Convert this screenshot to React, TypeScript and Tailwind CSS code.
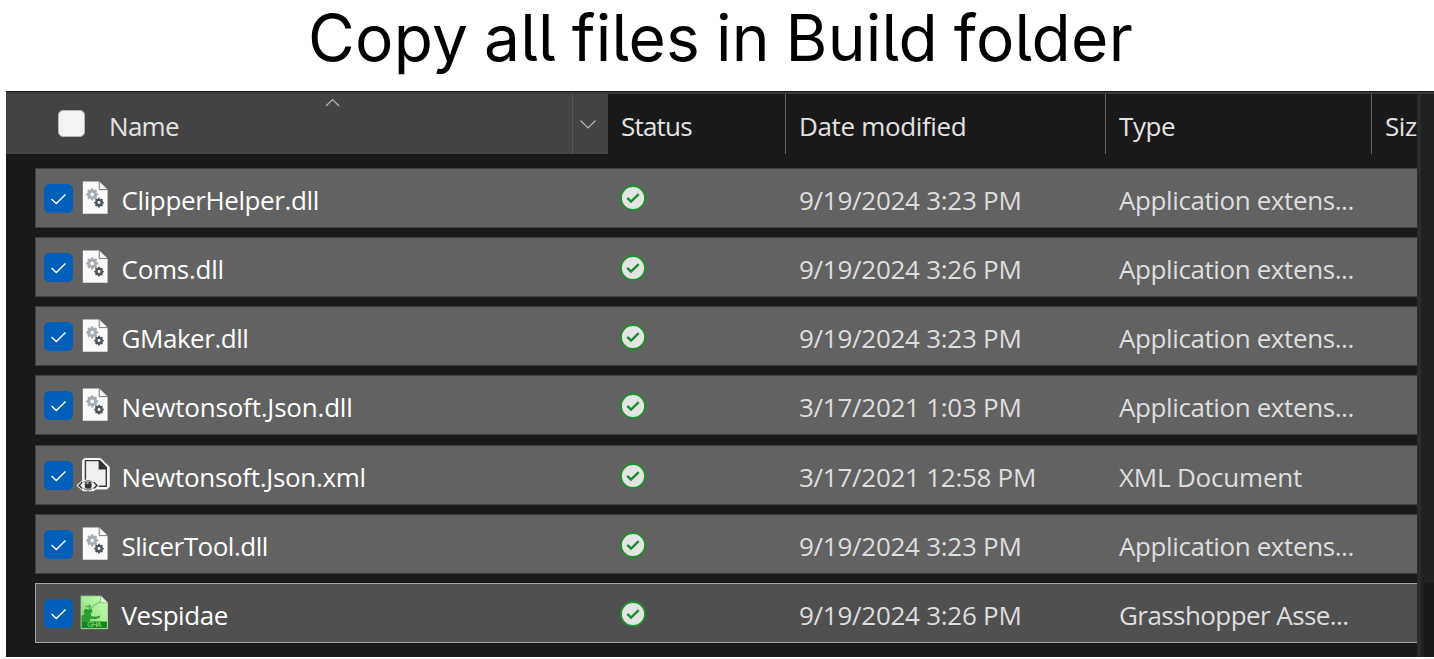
const rows = [
  { name: "ClipperHelper.dll", date: "9/19/2024 3:23 PM", type: "Application extens...", icon: "dll" },
  { name: "Coms.dll", date: "9/19/2024 3:26 PM", type: "Application extens...", icon: "dll" },
  { name: "GMaker.dll", date: "9/19/2024 3:23 PM", type: "Application extens...", icon: "dll" },
  { name: "Newtonsoft.Json.dll", date: "3/17/2021 1:03 PM", type: "Application extens...", icon: "dll" },
  { name: "Newtonsoft.Json.xml", date: "3/17/2021 12:58 PM", type: "XML Document", icon: "xml" },
  { name: "SlicerTool.dll", date: "9/19/2024 3:23 PM", type: "Application extens...", icon: "dll" },
  { name: "Vespidae", date: "9/19/2024 3:26 PM", type: "Grasshopper Asse...", icon: "gha" },
];

function Gear({ cx, cy, r, color }: { cx: number; cy: number; r: number; color: string }) {
  return (
    <g stroke={color} fill="none">
      <circle cx={cx} cy={cy} r={r * 0.56} strokeWidth={r * 0.5} />
      {[0, 45, 90, 135, 180, 225, 270, 315].map((a) => (
        <path key={a} d={`M${cx} ${cy - r * 0.68}V${cy - r}`} strokeWidth={r * 0.38} transform={`rotate(${a} ${cx} ${cy})`} />
      ))}
    </g>
  );
}

function FileIcon({ kind }: { kind: string }) {
  if (kind === "dll")
    return (
      <svg width="34" height="38" viewBox="0 0 34 38" className="block">
        <path d="M4.8 2.5H21L29.6 11V34.7H4.8Z" fill="#fafafa" />
        <path d="M21.2 2.5V10.6H29.6" fill="#f3f3f3" stroke="#777" strokeWidth="1" />
        <Gear cx={14.2} cy={15.4} r={6} color="#a3abb3" />
        <Gear cx={21} cy={23.6} r={4.8} color="#4b555d" />
      </svg>
    );
  if (kind === "xml")
    return (
      <svg width="34" height="38" viewBox="0 0 34 38" className="block overflow-visible">
        <path d="M7 3.4H22L30.4 11.4V30L28.4 32H16L5.4 26V5Z" fill="#f5f5f5" stroke="#f5f5f5" strokeWidth="2.8" strokeLinejoin="round" />
        <path d="M7.4 24V4.6H21.5L28.3 12V30.2H19.5" fill="#efefef" stroke="#3a3a3a" strokeWidth="1.4" />
        <path d="M20.6 4.6H22.4L28.8 11V13.6H20.6Z" fill="#333" />
        <path d="M0 29.4L5.5 25H15.5L20 29.4L15.5 34H5.5Z" fill="#f5f5f5" stroke="#f5f5f5" strokeWidth="2.4" strokeLinejoin="round" />
        <path d="M4.2 26.3L1 29.4L4.2 32.5M15.8 26.3L19 29.4L15.8 32.5" fill="none" stroke="#3a3a3a" strokeWidth="1.5" />
        <path d="M5.6 26.4Q10 22.8 14.4 26.4M5.6 32.4Q10 35.8 14.4 32.4" fill="none" stroke="#5a5a5a" strokeWidth="1" />
        <rect x="6.8" y="25.8" width="6.8" height="7" rx="2.4" fill="#333" />
        <path d="M8.4 27.2H10.6" stroke="#ddd" strokeWidth="1.2" />
      </svg>
    );
  return (
    <svg width="34" height="38" viewBox="0 0 34 38" className="block">
      <defs>
        <linearGradient id="leaf" x1="0" y1="1" x2="1" y2="0">
          <stop offset="0" stopColor="#6cc863" />
          <stop offset="0.5" stopColor="#a5ec93" />
          <stop offset="1" stopColor="#ccfcba" />
        </linearGradient>
      </defs>
      <path d="M3.2 2.2H23L29.4 8.4V34.6H3.2Z" fill="url(#leaf)" stroke="#b0e0a4" />
      <path d="M3.5 27.5V22L6.5 20L5.5 17.5L7.5 14.5L10 15.5L13.5 14.8L14.5 17.5L12.5 20L13.5 22.3L18 22.8L22 21.6V23.6L17.5 25.3L12.5 24.6L11.5 27.5Z" fill="#2c9c34" />
      <path d="M12.5 15L16 11.5L24 6.5" fill="none" stroke="#85c278" strokeWidth="1.2" />
      <path d="M7.5 12.5H13M11.5 15V10.5" fill="none" stroke="#55a750" strokeWidth="1.4" />
      <path d="M22.6 2.7V8.8H29" fill="#e8fbe2" stroke="#85c278" />
      <path d="M3.7 27.5H28.9V34.1H3.7Z" fill="#108718" />
      <text x="9.3" y="33.4" fontSize="7" textLength="14" fontFamily="Liberation Sans, sans-serif" fill="#a3e494">GHA</text>
    </svg>
  );
}

function Synced() {
  return (
    <svg width="26" height="26" viewBox="0 0 26 26" className="block">
      <circle cx="13" cy="13" r="12" fill="#e4e4e4" stroke="#189429" strokeWidth="1.8" />
      <path d="M7.3 12.9L11 16.6L18.7 9.1" fill="none" stroke="#168b2b" strokeWidth="2.3" />
    </svg>
  );
}

const tracking: Record<string, string> = {
  "ClipperHelper.dll": "tracking-[-0.38px]",
  "Coms.dll": "tracking-[-0.25px]",
  "GMaker.dll": "tracking-[-0.45px]",
  "Newtonsoft.Json.dll": "tracking-[-0.2px]",
  "Newtonsoft.Json.xml": "tracking-[-0.3px]",
  "SlicerTool.dll": "tracking-[-0.48px]",
  Vespidae: "tracking-[-0.45px]",
  "9/19/2024 3:23 PM": "tracking-[-0.27px]",
  "9/19/2024 3:26 PM": "tracking-[-0.27px]",
  "3/17/2021 1:03 PM": "tracking-[-0.27px]",
  "3/17/2021 12:58 PM": "tracking-[-0.27px]",
  "Application extens...": "tracking-[-0.4px]",
  "XML Document": "tracking-[-0.2px]",
  "Grasshopper Asse...": "tracking-[-0.57px]",
};

export default function App() {
  return (
    <div className="flex h-[659px] w-[1434px] flex-col overflow-hidden bg-white font-['Open_Sans','Noto_Sans',sans-serif] text-[26px]">
      <h1 className="h-[91px] whitespace-nowrap pl-[308px] font-['Inter',sans-serif] text-[64px] leading-[76px] tracking-[0.3px] text-black [font-feature-settings:'cv05','ss02'] [word-spacing:-2.6px]">
        Copy all files in Build folder
      </h1>
      <div className="ml-[6px] flex h-[566px] flex-col border-t border-[#161616] bg-[#191919]">
        <div className="h-[2px] shrink-0 bg-[#3b3b3b]" />
        <div className="flex min-h-0 flex-1">
          <div className="flex w-[1411px] shrink-0 flex-col overflow-hidden">
            <header className="flex h-[60px] shrink-0 leading-[64px] text-[#e3e3e3]">
              <div className="flex w-[567px] shrink-0 border-r border-[#565656] bg-[#434343]">
                <div className="ml-[52px] mt-[16px] h-[27px] w-[27px] shrink-0 rounded-[5px] border border-[#b5b5b5] bg-[#f3f3f3]" />
                <div className="ml-[24px] w-[216px] shrink-0 tracking-[-0.7px]">Name</div>
                <svg width="16" height="10" viewBox="0 0 16 10" className="mt-[4px]"><path d="M1 8L7.5 1.5L14 8" fill="none" stroke="#b8b8b8" strokeWidth="1.2" /></svg>
              </div>
              <div className="flex w-[35px] shrink-0 bg-[#434343] pl-[6px] pt-[25px]">
                <svg width="18" height="12" viewBox="0 0 18 12"><path d="M1.5 1.5L9 9L16.5 1.5" fill="none" stroke="#b8b8b8" strokeWidth="1.2" /></svg>
              </div>
              <div className="w-[178px] shrink-0 border-r border-[#636363] pl-[13px] tracking-[-0.8px]">Status</div>
              <div className="w-[320px] shrink-0 whitespace-nowrap border-r border-[#636363] pl-[13px] tracking-[-0.35px]">Date modified</div>
              <div className="w-[266px] shrink-0 border-r border-[#636363] pl-[13px] tracking-[-0.4px]">Type</div>
              <div className="shrink-0 pl-[13px] tracking-[-0.4px]">Siz</div>
            </header>
            <main className="ml-[29px] mt-[13.5px] flex flex-col gap-[9.33px] leading-[63.6px]">
              {rows.map((r, i) => (
                <div
                  key={r.name}
                  className={
                    i === 6
                      ? "flex h-[60px] border border-r-0 border-[#a4a4a4] bg-[#505050] text-[#dedede]"
                      : "flex h-[60px] border border-r-0 border-[#414141] bg-[#626262] text-[#dedede]"
                  }
                >
                  <svg width="29" height="29" viewBox="0 0 29 29" className="ml-[8px] mt-[15px] shrink-0">
                    <rect width="29" height="29" rx="5.5" fill="#005fb8" />
                    <path d="M7.5 15L12.3 19.5L21.5 10.5" fill="none" stroke="#fff" strokeWidth="1.4" />
                  </svg>
                  <div className="ml-[5px] mt-[10px] shrink-0"><FileIcon kind={r.icon} /></div>
                  <div className="ml-[9.5px] w-[498.5px] shrink-0 whitespace-nowrap text-white"><span className={tracking[r.name]}>{r.name}</span></div>
                  <div className="mt-[16.7px] w-[179px] shrink-0"><Synced /></div>
                  <div className="w-[320px] shrink-0 whitespace-nowrap"><span className={tracking[r.date]}>{r.date}</span></div>
                  <div className="shrink-0 whitespace-nowrap"><span className={tracking[r.type]}>{r.type}</span></div>
                </div>
              ))}
            </main>
          </div>
          <div className="w-[4px] bg-[#2b2b2b]" />
          <div className="flex-1 bg-[#202020]">
            <div className="ml-[3px] mt-[489px] h-[74px] bg-[#191919]" />
          </div>
        </div>
      </div>
    </div>
  );
}
